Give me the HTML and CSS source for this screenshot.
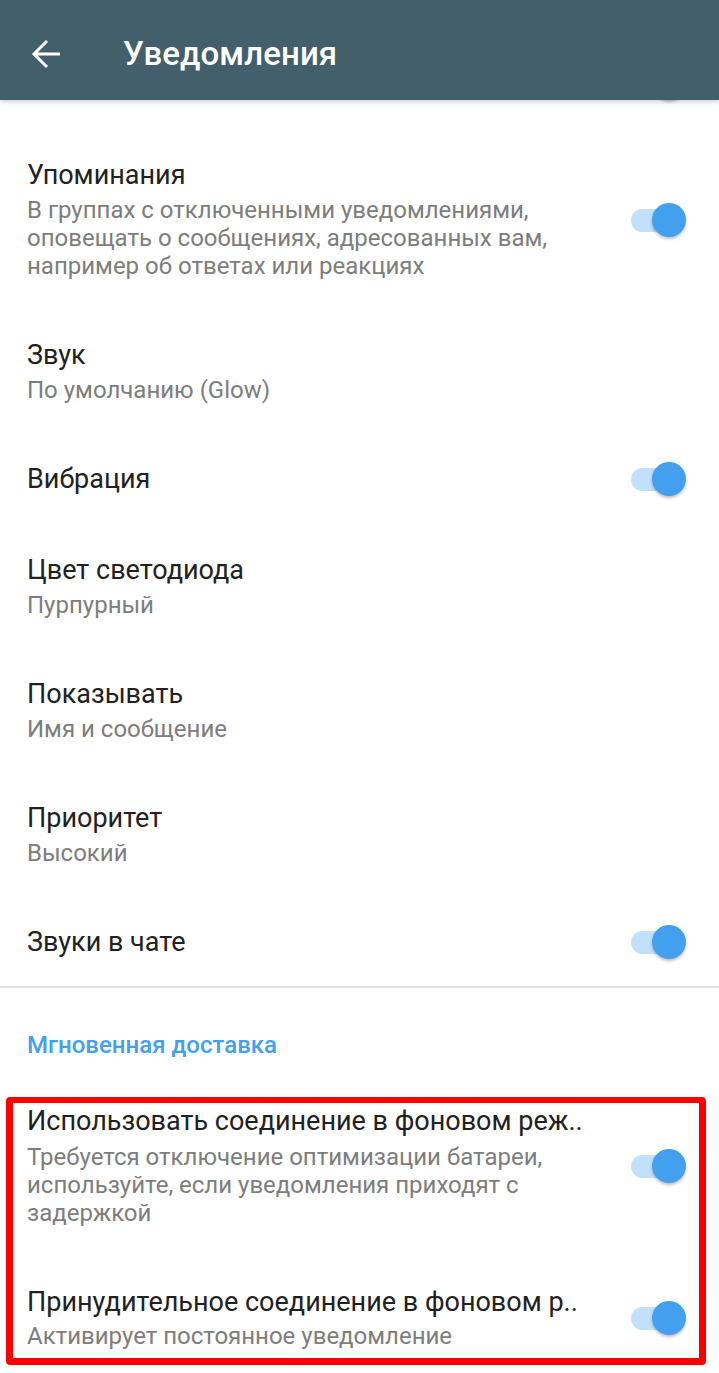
FILE: index.html
```html
<html>
<head>
<meta charset="UTF-8" />
<meta name="viewport" content="width=device-width, initial-scale=1" />
<title>Уведомления</title>
<link rel="stylesheet" href="styles.css">
</head>
<body>
<header class="toolbar">
  <button class="back" aria-label="Назад">
    <svg width="32" height="32" viewBox="0 0 32 32" aria-hidden="true">
      <path d="M29 16H4M16 3L3 16l13 13" fill="none" stroke="#fff" stroke-width="3" />
    </svg>
  </button>
  <h1>Уведомления</h1>
</header>

<main class="settings">
  <!-- bottom of the row scrolled under the toolbar -->
  <div class="scrolled">
    <span class="switch on"></span>
  </div>

  <div class="row">
    <div class="text">
      <div class="title">Упоминания</div>
      <div class="value">В группах с отключенными уведомлениями,<br>оповещать о сообщениях, адресованных вам,<br>например об ответах или реакциях</div>
    </div>
    <span class="switch on"></span>
  </div>

  <div class="row">
    <div class="text">
      <div class="title">Звук</div>
      <div class="value">По умолчанию (Glow)</div>
    </div>
  </div>

  <div class="row">
    <div class="text">
      <div class="title">Вибрация</div>
    </div>
    <span class="switch on"></span>
  </div>

  <div class="row">
    <div class="text">
      <div class="title">Цвет светодиода</div>
      <div class="value">Пурпурный</div>
    </div>
  </div>

  <div class="row">
    <div class="text">
      <div class="title">Показывать</div>
      <div class="value">Имя и сообщение</div>
    </div>
  </div>

  <div class="row">
    <div class="text">
      <div class="title">Приоритет</div>
      <div class="value">Высокий</div>
    </div>
  </div>

  <div class="row last-in-section">
    <div class="text">
      <div class="title">Звуки в чате</div>
    </div>
    <span class="switch on"></span>
  </div>

  <div class="divider"></div>

  <div class="section-title">Мгновенная доставка</div>

  <div class="highlight">
    <div class="row first">
      <div class="text">
        <div class="title">Использовать соединение в фоновом реж..</div>
        <div class="value">Требуется отключение оптимизации батареи,<br>используйте, если уведомления приходят с<br>задержкой</div>
      </div>
      <span class="switch on"></span>
    </div>

    <div class="row last">
      <div class="text">
        <div class="title">Принудительное соединение в фоновом р..</div>
        <div class="value">Активирует постоянное уведомление</div>
      </div>
      <span class="switch on"></span>
    </div>
  </div>
</main>
</body>
</html>
```

FILE: styles.css
```css
body {
  margin: 0;
  font-family: Roboto, 'Noto Sans', sans-serif;
  background: #fff;
  color: #222;
}

/* Toolbar */
.toolbar {
  height: 100px;
  background: #425f6b;
  display: flex;
  align-items: center;
  box-shadow: 0 2px 5px rgba(0, 0, 0, 0.18);
  position: relative;
  z-index: 1;
}

.back {
  width: 32px;
  height: 32px;
  margin: 8px 0 0 31px;
  padding: 0;
  border: none;
  background: none;
  display: flex;
}

.toolbar h1 {
  margin: 6px 0 0 60px;
  font-size: 33px;
  font-weight: 500;
  color: #fff;
  letter-spacing: 0.1px;
}

/* List */
.scrolled {
  height: 30px;
  display: flex;
  justify-content: flex-end;
  align-items: flex-start;
  padding-right: 33px;
}

.scrolled .switch {
  margin-top: -33px;
}

.row {
  display: flex;
  align-items: center;
  padding: 29px 33px 30px 27px;
}

.text {
  flex-grow: 1;
  min-width: 0;
}

.title {
  font-size: 27px;
  line-height: 32px;
  color: #212121;
  white-space: nowrap;
}

.value {
  margin-top: 5px;
  font-size: 24px;
  line-height: 28px;
  color: #7d7d7d;
}

/* Switch */
.switch {
  position: relative;
  flex-shrink: 0;
  width: 55px;
  height: 32px;
}

.switch::before {
  content: '';
  position: absolute;
  left: 0;
  top: 5px;
  width: 50px;
  height: 23px;
  border-radius: 12px;
  background: #c2e0fb;
}

.switch::after {
  content: '';
  position: absolute;
  right: 0;
  top: -1px;
  width: 34px;
  height: 34px;
  border-radius: 50%;
  background: #42a0ee;
  box-shadow: 0 2px 3px rgba(0, 0, 0, 0.25);
}

.row.last-in-section {
  padding-bottom: 28px;
}

.divider {
  height: 2px;
  background: #e0e0e0;
}

.section-title {
  padding: 43px 27px 38px;
  font-size: 24px;
  line-height: 28px;
  font-weight: 500;
  color: #42a0ee;
}

/* Red annotation box */
.highlight {
  margin: 0 13px 0 6px;
  border: 7px solid #ff0000;
  border-top-width: 6px;
  border-radius: 4px;
}

.highlight .row {
  padding-left: 14px;
  padding-right: 13px;
}

.highlight .row.first {
  padding-top: 2px;
  padding-bottom: 29px;
}

.highlight .row.first .value {
  margin-top: 6px;
}

.highlight .row.last {
  padding-top: 30px;
  padding-bottom: 8px;
}

.highlight .row.last .value {
  margin-top: 4px;
}
```
